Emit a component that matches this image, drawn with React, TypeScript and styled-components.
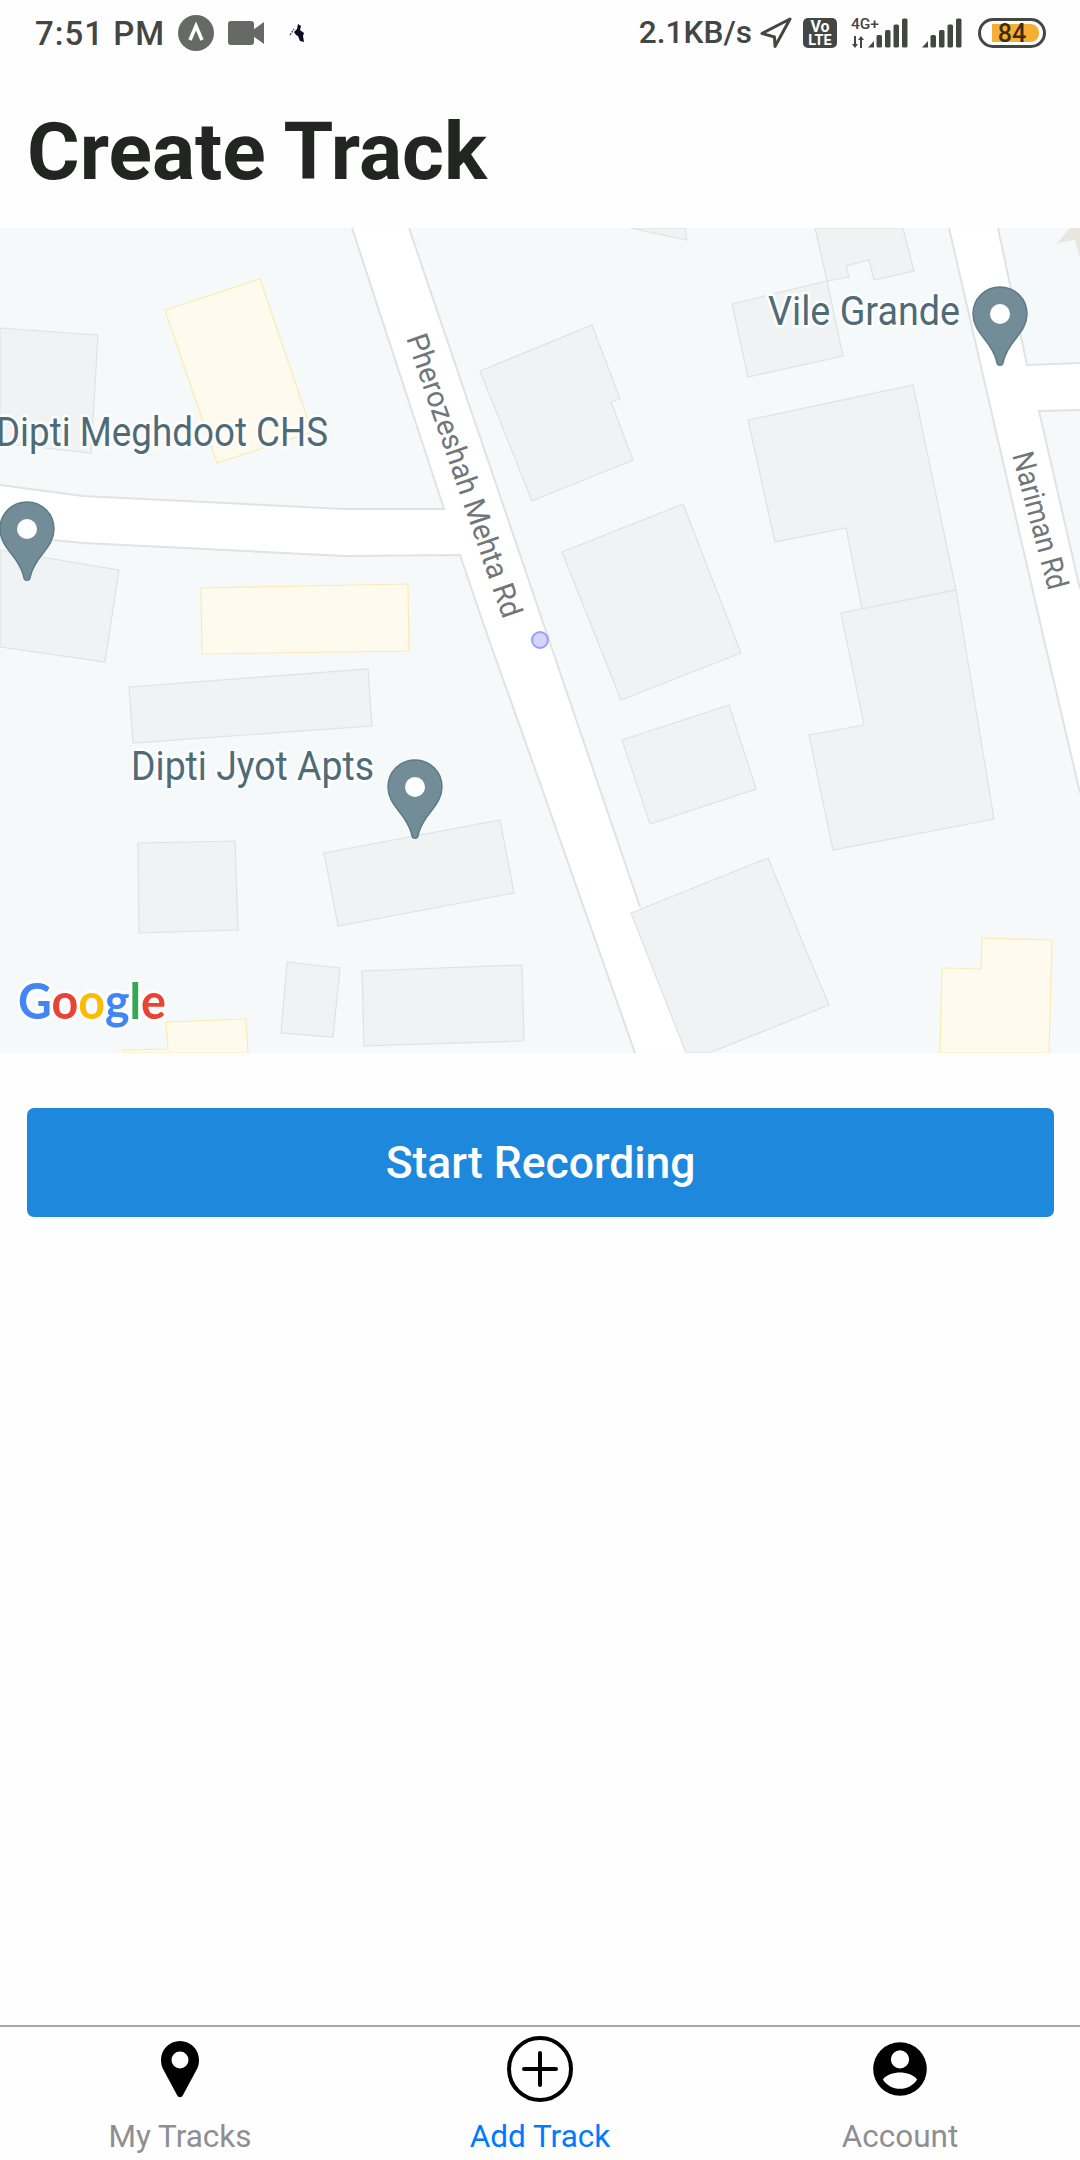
import styled, { createGlobalStyle } from "styled-components";

const GlobalStyle = createGlobalStyle`
  html, body {
    margin: 0;
    padding: 0;
    background: #fefefe;
  }
  * {
    box-sizing: border-box;
  }
`;

const Page = styled.div`
  width: 1080px;
  height: 2160px;
  display: flex;
  flex-direction: column;
  background: #fefefe;
  font-family: Roboto, "Liberation Sans", sans-serif;
  overflow: hidden;
`;

const StatusBar = styled.div`
  height: 66px;
  padding: 0 34px 0 35px;
  display: flex;
  align-items: center;
  justify-content: space-between;
  color: #444644;
`;

const StatusGroup = styled.div`
  display: flex;
  align-items: center;
`;

const ClockText = styled.span`
  font-size: 33px;
  font-weight: 500;
  line-height: 1;
  letter-spacing: 1px;
`;

const SpeedText = styled.span`
  font-size: 31.6px;
  font-weight: 500;
  line-height: 1;
`;

const StatusIcon = styled.svg<{ $left: number }>`
  display: block;
  flex: none;
  margin-left: ${(p) => p.$left}px;
`;

const Title = styled.h1`
  margin: 0;
  height: 162px;
  padding: 39px 0 0 27px;
  font-size: 80.5px;
  line-height: 94px;
  font-weight: 700;
  color: #232523;
`;

const MapFrame = styled.svg`
  display: block;
  flex: none;
  width: 1080px;
  height: 825px;
`;

const MapLabel = styled.text`
  font-family: Roboto, sans-serif;
  font-size: 41px;
  fill: #4f6b78;
  stroke: #ffffff;
  stroke-width: 5px;
  stroke-opacity: 0.9;
  paint-order: stroke;
`;

const RoadLabel = styled.text`
  font-family: Roboto, sans-serif;
  font-size: 30px;
  fill: #70767a;
  stroke: #ffffff;
  stroke-width: 3px;
  paint-order: stroke;
`;

const GoogleMark = styled.text`
  font-family: Lato, Roboto, sans-serif;
  font-size: 50px;
  font-weight: 700;
  stroke: #ffffff;
  stroke-width: 6px;
  stroke-opacity: 0.85;
  paint-order: stroke;
`;

const RecordButton = styled.button`
  flex: none;
  height: 109px;
  margin: 55px 26px 0 27px;
  border: none;
  border-radius: 7px;
  background: #1e88dc;
  color: #ffffff;
  font-family: inherit;
  font-size: 44.4px;
  font-weight: 500;
`;

const Spacer = styled.div`
  flex: 1;
`;

const TabBar = styled.nav`
  flex: none;
  height: 135px;
  display: flex;
  border-top: 2px solid #a7a7a7;
`;

const TabItem = styled.div`
  flex: 1;
  display: flex;
  flex-direction: column;
  align-items: center;
`;

const TabIconSlot = styled.div`
  height: 84px;
  display: flex;
  align-items: center;
  justify-content: center;
`;

const TabLabel = styled.span<{ $active?: boolean }>`
  margin-top: 8px;
  font-size: 31.5px;
  line-height: 36px;
  color: ${(p) => (p.$active ? "#007aff" : "#8e8e93")};
`;

const BUILDINGS = [
  "0,328 98,335 91,453 0,443",
  "0,550 119,570 105,662 0,647",
  "129,687 368,669 372,726 133,743",
  "138,843 235,841 238,930 139,933",
  "324,853 500,820 514,893 338,926",
  "287,962 340,968 333,1037 281,1033",
  "362,971 522,965 524,1041 364,1046",
  "631,913 768,858 810,960 829,1005 709,1053 686,1053",
  "622,740 729,705 756,789 650,824",
  "630,228 685,228 687,240",
  "815,228 903,228 914,271 874,280 869,260 846,266 849,277 827,281",
  "732,304 827,281 843,356 748,377",
  "480,371 592,325 620,399 611,402 633,460 532,501",
  "562,552 683,504 741,653 621,700",
  "748,420 913,385 956,590 862,609 846,528 775,542",
  "841,613 956,590 994,819 833,850 809,735 864,725",
];

const YELLOW_BUILDINGS = [
  "165,310 260,279 312,432 217,463",
  "201,588 408,584 409,651 202,654",
  "166,1022 246,1019 248,1053 123,1053 123,1050 168,1049",
  "982,938 1052,940 1049,1053 940,1053 942,968 981,969",
];

const ROAD_EDGES = [
  "352,228 444,509 344,509 83,496 0,485",
  "0,533 53,540 83,543 344,556 460,555 489,640 540,783 635,1053",
  "409,228 549,640 640,907",
  "949,228 1046,648 1080,793",
  "998,228 1027,365 1080,363",
  "1080,589 1039,411 1080,410",
];

const PINS = [
  [1000, 314],
  [27, 529],
  [415, 787],
];

function Pin({ x, y }: { x: number; y: number }) {
  return (
    <g transform={`translate(${x} ${y})`}>
      <path
        d="M0,-27C15,-27 27,-15 27,0C27,13 18,21 11,31C7,37 4,43 3,49C2.5,52 -2.5,52 -3,49C-4,43 -7,37 -11,31C-18,21 -27,13 -27,0C-27,-15 -15,-27 0,-27Z"
        fill="#728d98"
        stroke="#5f7a86"
        strokeWidth="1.5"
      />
      <circle r="10" fill="#ffffff" />
    </g>
  );
}

function MapView() {
  return (
    <MapFrame viewBox="0 228 1080 825">
      <rect x="0" y="228" width="1080" height="825" fill="#f6f9fa" />
      <path
        d="M352,228L444,509L344,509L83,496L0,485L0,533L53,540L83,543L344,556L460,555L489,640L540,783L635,1053L686,1053L640,907L549,640L409,228Z"
        fill="#ffffff"
      />
      <path
        d="M949,228L1046,648L1080,793L1080,589L1039,411L1080,410L1080,363L1027,365L998,228Z"
        fill="#ffffff"
      />
      {ROAD_EDGES.map((points) => (
        <polyline key={points} points={points} fill="none" stroke="#dfe3e5" strokeWidth="2" />
      ))}
      <polygon points="1057,243 1070,228 1080,228 1080,258 1075,240" fill="#e9e6e0" />
      {BUILDINGS.map((points) => (
        <polygon key={points} points={points} fill="#f0f3f3" stroke="#dfe1e2" strokeWidth="1.2" />
      ))}
      {YELLOW_BUILDINGS.map((points) => (
        <polygon key={points} points={points} fill="#fffaee" stroke="#fdeab0" strokeWidth="1.2" />
      ))}
      <RoadLabel
        transform="translate(406 338) rotate(71)"
        textLength="298"
        lengthAdjust="spacingAndGlyphs"
      >
        Pherozeshah Mehta Rd
      </RoadLabel>
      <RoadLabel
        transform="translate(1012 455) rotate(75)"
        textLength="141"
        lengthAdjust="spacingAndGlyphs"
      >
        Nariman Rd
      </RoadLabel>
      <MapLabel x="-4" y="446" textLength="332" lengthAdjust="spacingAndGlyphs">
        Dipti Meghdoot CHS
      </MapLabel>
      <MapLabel x="768" y="325" textLength="192" lengthAdjust="spacingAndGlyphs">
        Vile Grande
      </MapLabel>
      <MapLabel x="131" y="780" textLength="243" lengthAdjust="spacingAndGlyphs">
        Dipti Jyot Apts
      </MapLabel>
      {PINS.map(([x, y]) => (
        <Pin key={x} x={x} y={y} />
      ))}
      <circle cx="540" cy="640" r="8" fill="#d4d4ff" stroke="#9c9cff" strokeWidth="2" />
      <GoogleMark x="18" y="1019" textLength="148" lengthAdjust="spacingAndGlyphs">
        <tspan fill="#4285f4">G</tspan>
        <tspan fill="#ea4335">o</tspan>
        <tspan fill="#fbbc05">o</tspan>
        <tspan fill="#4285f4">g</tspan>
        <tspan fill="#34a853">l</tspan>
        <tspan fill="#ea4335">e</tspan>
      </GoogleMark>
    </MapFrame>
  );
}

function Bars() {
  return (
    <>
      <path d="M0,29.500L6,23V29.500Z" />
      <rect x="8.500" y="17" width="5.500" height="12.500" rx="1.500" />
      <rect x="17" y="12" width="5.500" height="17.500" rx="1.500" />
      <rect x="25.500" y="6.500" width="5.500" height="23" rx="1.500" />
      <rect x="34" y="0.500" width="5.500" height="29" rx="1.500" />
    </>
  );
}

function App() {
  return (
    <Page>
      <GlobalStyle />
      <StatusBar>
        <StatusGroup>
          <ClockText>7:51 PM</ClockText>
          <StatusIcon $left={13} width="36" height="36" viewBox="0 0 36 36">
            <circle cx="18" cy="18" r="18" fill="#666966" />
            <path d="M12,25L18,11L24,25" fill="none" stroke="#ffffff" strokeWidth="3.500" />
          </StatusIcon>
          <StatusIcon $left={14} width="36" height="24" viewBox="0 0 36 24" fill="#666966">
            <rect x="0" y="0" width="26" height="24" rx="3" />
            <path d="M25,9L36,1V23L25,15Z" />
          </StatusIcon>
          <StatusIcon $left={25} width="16" height="20" viewBox="0 0 16 20">
            <path d="M9,1L12,3L11,7L15,10L14,13L15,19L11,18L9,13L7,12L5,9L8,6Z" fill="#0c0c22" />
            <path d="M1,12L5,6" stroke="#55556a" strokeWidth="1.500" strokeDasharray="2 1" />
          </StatusIcon>
        </StatusGroup>
        <StatusGroup>
          <SpeedText>2.1KB/s</SpeedText>
          <StatusIcon $left={8} width="32" height="32" viewBox="0 0 32 32">
            <path
              d="M30,2L2,16.500L14.500,20L15,29.500Z"
              fill="none"
              stroke="#444644"
              strokeWidth="3"
              strokeLinejoin="round"
            />
          </StatusIcon>
          <StatusIcon $left={11} width="34" height="30" viewBox="0 0 34 30">
            <rect width="34" height="30" rx="5" fill="#444644" />
            <text x="17" y="14" textAnchor="middle" fontSize="16" fontWeight="700" fill="#ffffff">
              Vo
            </text>
            <text x="17" y="27" textAnchor="middle" fontSize="14.500" fontWeight="700" fill="#ffffff">
              LTE
            </text>
          </StatusIcon>
          <StatusIcon $left={14} width="57" height="30" viewBox="0 0 57 30" fill="#444644">
            <text x="0" y="11" fontSize="15.500" fontWeight="500">
              4G+
            </text>
            <path d="M3,18H5V26H7L4,30L1,26H3ZM9,30H11V22H13L10,18L7,22H9Z" />
            <g transform="translate(17 0)">
              <Bars />
            </g>
          </StatusIcon>
          <StatusIcon $left={14} width="40" height="30" viewBox="0 0 40 30" fill="#444644">
            <Bars />
          </StatusIcon>
          <StatusIcon $left={16} width="68" height="30" viewBox="0 0 68 30">
            <rect x="1.500" y="1.500" width="65" height="27" rx="13.500" fill="none" stroke="#444644" strokeWidth="3" />
            <path d="M14,6H52C58,6 61,10 61,15C61,20 58,24 52,24H14Z" fill="#f6ae35" />
            <text x="34" y="24" textAnchor="middle" fontSize="25" fontWeight="500" fill="#3d2c10">
              84
            </text>
          </StatusIcon>
        </StatusGroup>
      </StatusBar>
      <Title>Create Track</Title>
      <MapView />
      <RecordButton>Start Recording</RecordButton>
      <Spacer />
      <TabBar>
        <TabItem>
          <TabIconSlot>
            <svg width="40" height="58" viewBox="0 0 40 58">
              <path
                fillRule="evenodd"
                d="M20,1C9.500,1 1,9.500 1,20C1,24 2,27 3,29L17,55C18.500,58 21.500,58 23,55L37,29C38,27 39,24 39,20C39,9.500 30.500,1 20,1ZM20,11.500A8.500,8.500 0 1 1 20,28.500A8.500,8.500 0 1 1 20,11.500Z"
                fill="#000000"
              />
            </svg>
          </TabIconSlot>
          <TabLabel>My Tracks</TabLabel>
        </TabItem>
        <TabItem>
          <TabIconSlot>
            <svg width="66" height="66" viewBox="0 0 66 66">
              <circle cx="33" cy="33" r="31" fill="none" stroke="#000000" strokeWidth="4" />
              <path d="M33,17V49M17,33H49" fill="none" stroke="#000000" strokeWidth="4" strokeLinecap="round" />
            </svg>
          </TabIconSlot>
          <TabLabel $active>Add Track</TabLabel>
        </TabItem>
        <TabItem>
          <TabIconSlot>
            <svg width="56" height="56" viewBox="0 0 24 24">
              <path
                d="M12,0.500A11.500,11.500 0 1 0 12,23.500A11.500,11.500 0 1 0 12,0.500ZM12,4A3.900,3.900 0 1 1 12,11.800A3.900,3.900 0 1 1 12,4ZM12,20.500C9,20.500 6.300,19 4.700,16.600C5.500,14.600 9.500,13.500 12,13.500C14.500,13.500 18.500,14.600 19.300,16.600C17.700,19 15,20.500 12,20.500Z"
                fillRule="evenodd"
                fill="#000000"
              />
            </svg>
          </TabIconSlot>
          <TabLabel>Account</TabLabel>
        </TabItem>
      </TabBar>
    </Page>
  );
}

export default App;
